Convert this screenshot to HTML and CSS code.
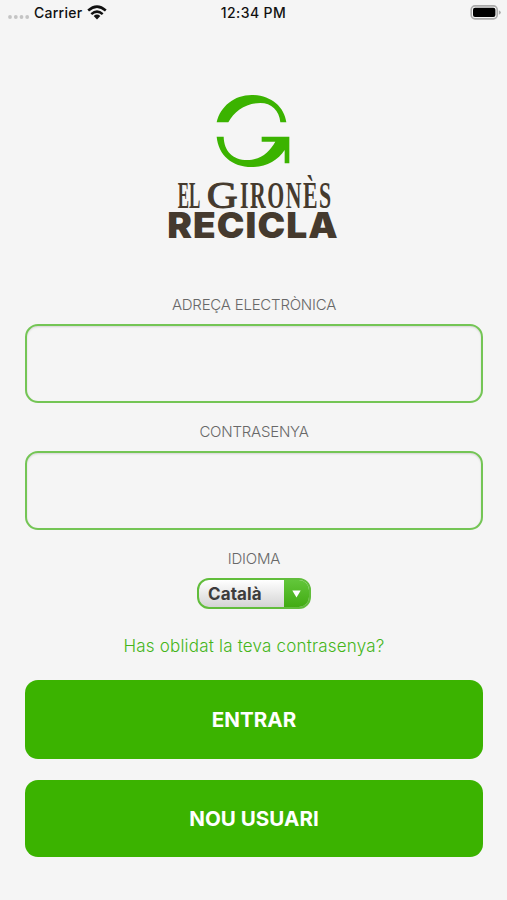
FILE: index.html
```html
<!DOCTYPE html>
<html lang="ca">
<head>
<meta charset="utf-8">
<title>El Gironès Recicla</title>
<link rel="stylesheet" href="styles.css">
</head>
<body>
<header class="status">
  <div class="carrier">
    <svg class="dots" width="22" height="4" viewBox="0 0 22 4"><circle cx="2" cy="2" r="1.9"/><circle cx="7.8" cy="2" r="1.9"/><circle cx="13.5" cy="2" r="1.9"/><circle cx="19.2" cy="2" r="1.9"/></svg>
    <span class="carrier-name">Carrier</span>
    <svg class="wifi" width="20" height="15" viewBox="0 0 20 15"><g fill="none" stroke="#111" stroke-width="2.5"><path d="M1.2 5.5Q10-2.3 18.8 5.5"/><path d="M4.3 9.1Q10 4.1 15.7 9.1"/></g><path d="M6.7 11Q10 8.1 13.3 11L10 14.4Z" fill="#111"/></svg>
  </div>
  <span class="time">12:34 PM</span>
  <svg class="battery" width="31" height="15" viewBox="0 0 31 15"><rect x="1.2" y=".9" width="26" height="13" rx="3.8" fill="#f5f5f5" stroke="#aaa" stroke-width="1.6"/><rect x="3" y="2.7" width="22.4" height="9.4" rx="2" fill="#000"/><path d="M28.8 5.2q2 .8 2 2.3t-2 2.3Z" fill="#aaa"/></svg>
</header>
<main>
  <svg class="logo" width="200" height="165" viewBox="0 0 600 495">
    <g fill="#3bb300">
      <path d="M185 112C196 64 238 30 290 30C346 30 388 64 394 112H376C373 76 349 54 316 54C273 54 238 78 220 112Z"/>
      <path d="M185 155H206C207 198 233 225 277 225C319 225 344 199 361 170H320V155H403V235H389V195C369 227 333 246 290 246C231 246 190 210 185 155Z"/>
    </g>
    <g class="logo-name">
      <text x="68" y="369" textLength="68" lengthAdjust="spacingAndGlyphs">EL</text>
      <text class="logo-g" x="155" y="369" textLength="93" lengthAdjust="spacingAndGlyphs">G</text>
      <text class="logo-rest" x="255" y="369" textLength="278" lengthAdjust="spacingAndGlyphs">IRONÈS</text>
    </g>
    <text class="logo-recicla" x="37" y="460" textLength="514" lengthAdjust="spacingAndGlyphs">RECICLA</text>
  </svg>
  <form class="form">
    <label class="label" for="email">ADREÇA ELECTRÒNICA</label>
    <input class="field" id="email" type="email">
    <label class="label" for="password">CONTRASENYA</label>
    <input class="field" id="password" type="password">
    <span class="label">IDIOMA</span>
    <button class="language" type="button">
      <span class="language-name">Català</span>
      <span class="language-arrow"><svg width="9" height="8" viewBox="0 0 9 8"><path d="M.3.5H8.7L4.5 7.5Z" fill="#fff"/></svg></span>
    </button>
    <a class="forgot">Has oblidat la teva contrasenya?</a>
    <button class="action enter" type="button">ENTRAR</button>
    <button class="action new-user" type="button">NOU USUARI</button>
  </form>
</main>
</body>
</html>
```
FILE: styles.css
```css
* { box-sizing: border-box; }
body {
  margin: 0;
  height: 900px;
  overflow: hidden;
  background: #f5f5f5;
  font-family: Inter, "Liberation Sans", sans-serif;
}
.status {
  display: grid;
  grid-template-columns: 1fr auto 1fr;
  align-items: center;
  height: 26px;
  padding: 0 6px 0 8px;
  color: #111;
  font-size: 14px;
  font-weight: 500;
}
.carrier { display: flex; align-items: center; }
.dots { fill: #c4c4c4; margin: 8px 4px 0 0; }
.carrier-name { letter-spacing: .25px; }
.wifi { margin: 0 0 1px 5px; }
.time { font-weight: 500; letter-spacing: .4px; margin-right: 2px; }
.carrier-name, .time { line-height: 26px; }
.battery { justify-self: end; margin-top: -1px; }
main { display: flex; flex-direction: column; align-items: center; padding-top: 59px; }
.logo { display: block; flex: none; margin-left: 3px; overflow: visible; }
.logo-name {
  fill: #453a2e;
  font-family: "Liberation Serif", serif;
  font-size: 114px;
  font-weight: 700;
}
.logo-g { font-weight: 400; stroke: #453a2e; stroke-width: 3px; }
.logo-rest { letter-spacing: 8px; }
.logo-recicla {
  fill: #453a2e;
  font-weight: 900;
  font-size: 106px;
  letter-spacing: 3px;
}
.form {
  display: flex;
  flex-direction: column;
  align-items: center;
  width: 100%;
  padding: 45px 24px 0 25px;
}
.label {
  height: 20px;
  line-height: 20px;
  color: #686868;
  font-size: 15px;
  font-weight: 300;
  letter-spacing: -.22px;
}
.field {
  width: 100%;
  height: 79px;
  margin: 9px 0 19px;
  padding: 0 16px;
  border: 2px solid #74c555;
  border-radius: 13px;
  background: #f5f5f5;
  box-shadow: inset 0 1px 2px #0002;
  font: 18px Inter, sans-serif;
}
.language {
  display: flex;
  width: 114px;
  height: 31px;
  margin: 9px 0 0;
  padding: 0;
  overflow: hidden;
  border: 2px solid #61bd3b;
  border-radius: 12px;
  background: linear-gradient(#fff, #d4d4d4);
}
.language-name {
  flex: 1;
  padding-left: 9px;
  color: #3c3c3c;
  font: 700 17px/28px Inter, sans-serif;
  letter-spacing: .1px;
  text-align: left;
}
.language-arrow {
  display: flex;
  align-items: center;
  justify-content: center;
  width: 25px;
  height: 27px;
  background: linear-gradient(#62c63a, #42ab13);
}
.forgot {
  margin-top: 26px;
  height: 22px;
  color: #45b51a;
  font-size: 17px;
  font-weight: 300;
  letter-spacing: .2px;
  line-height: 22px;
}
.action {
  width: 100%;
  height: 79px;
  padding: 0;
  border: 0;
  border-radius: 13px;
  background: #3bb300;
  color: #fff;
  font: 700 20.6px/24px Inter, sans-serif;
}
.enter { margin-top: 23px; }
.new-user { height: 77px; margin-top: 21px; }
```
